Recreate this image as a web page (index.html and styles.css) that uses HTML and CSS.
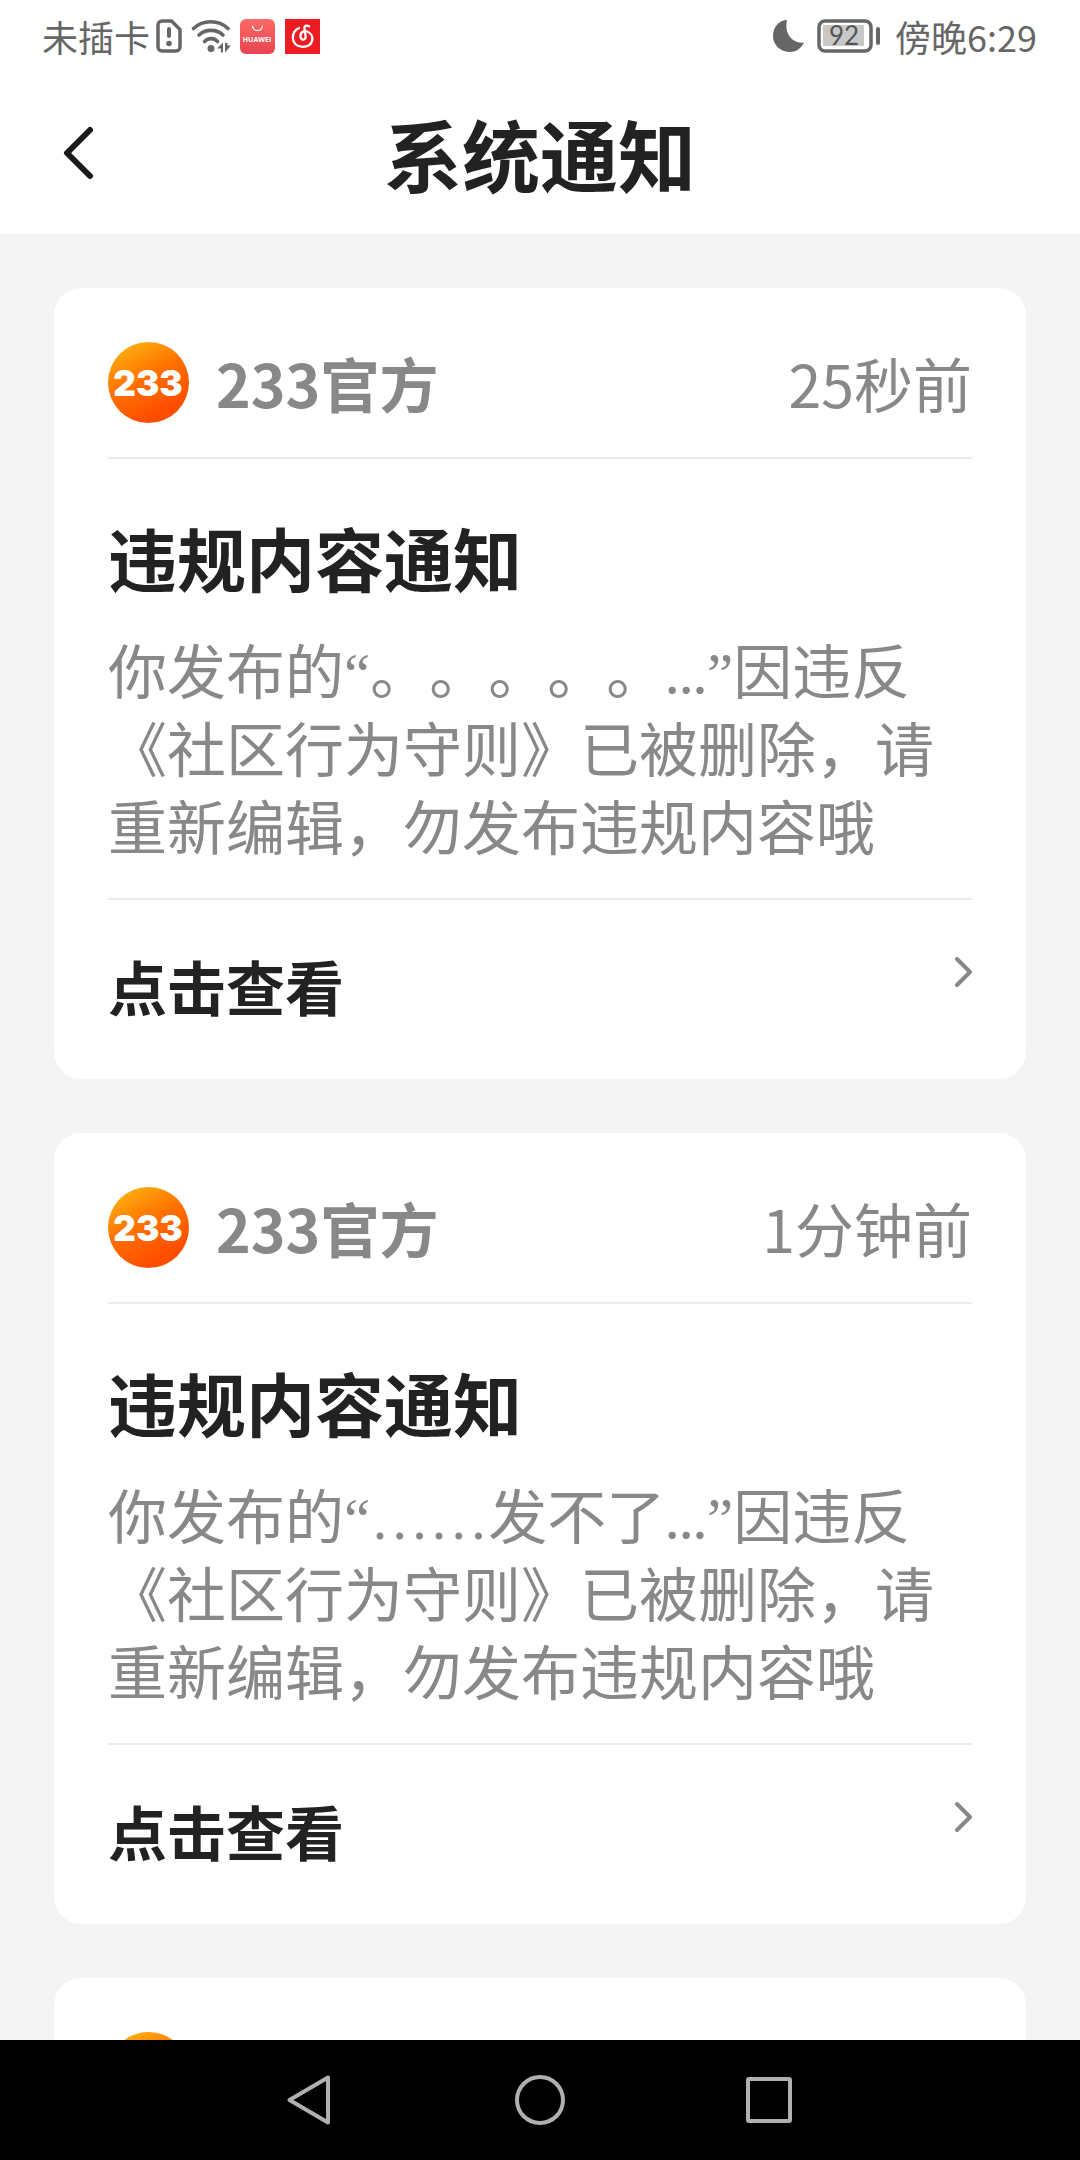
FILE: index.html
```html
<!DOCTYPE html>
<html lang="zh-CN">
<head>
<meta charset="utf-8">
<meta name="viewport" content="width=device-width, initial-scale=1">
<title>系统通知</title>
<link rel="stylesheet" href="styles.css">
</head>
<body>
<svg class="defs" width="0" height="0" aria-hidden="true">
  <defs>
    <linearGradient id="orange" x1="0.15" y1="0.05" x2="0.6" y2="0.9">
      <stop offset="0" stop-color="#ffb010"/>
      <stop offset="0.5" stop-color="#ff7200"/>
      <stop offset="1" stop-color="#ff4d00"/>
    </linearGradient>
    <linearGradient id="coral" x1="0" y1="0" x2="0" y2="1">
      <stop offset="0" stop-color="#fb6a66"/>
      <stop offset="1" stop-color="#e9434f"/>
    </linearGradient>
  </defs>
</svg>

<div class="statusbar">
  <div class="status-left">
    <span>未插卡</span>
    <svg class="sim" width="26" height="34" viewBox="0 0 26 34">
      <path d="M6 2h9.500L24 10.500V28a4 4 0 0 1-4 4H6a4 4 0 0 1-4-4V6a4 4 0 0 1 4-4z" fill="none" stroke="#666" stroke-width="3.500" stroke-linejoin="round"/>
      <path d="M13 10v7" stroke="#666" stroke-width="4" stroke-linecap="round"/>
      <circle cx="13" cy="24.500" r="2.800" fill="#666"/>
    </svg>
    <svg class="wifi" width="40" height="34" viewBox="0 0 40 34">
      <g fill="none" stroke="#666" stroke-width="3.600" stroke-linecap="round">
        <path d="M2.500 9.500C12 .500 27.500 .500 37 9.500"/>
        <path d="M8 16c6.500-6.200 17.500-6.200 24 0"/>
        <path d="M13.500 22.500c3.800-3.800 9.500-3.800 13 0"/>
      </g>
      <circle cx="20" cy="29.500" r="3.500" fill="#666"/>
      <path d="M26 29.500l6-6v10h-2v-4zM34 24v9.500l6-7h-3.500v-2.500z" fill="#666"/>
    </svg>
    <svg class="app" width="35" height="35" viewBox="0 0 35 35">
      <rect width="35" height="35" rx="6" fill="url(#coral)"/>
      <path d="M12.500 7c.800 6 9.200 6 10 0" fill="none" stroke="#fff" stroke-width="1.200" stroke-linecap="round"/>
      <text class="app-name" x="17" y="23" text-anchor="middle">HUAWEI</text>
    </svg>
    <svg class="app" width="35" height="35" viewBox="0 0 35 35">
      <rect width="35" height="35" fill="#ec1c24"/>
      <path d="M14 9C5.500 12 5 27.300 17.500 27.800 29 28 30.500 15.500 22 12.500c-3-1-7 .8-6.500 5.200.6 4.300 5.600 3.700 5.100-.5L19.500 10c-.6-3.500 2-4.200 4.500-2.700" fill="none" stroke="#fff" stroke-width="2.300" stroke-linecap="round"/>
    </svg>
  </div>
  <div class="status-right">
    <svg class="moon" width="32" height="34" viewBox="0 0 32 34">
      <path d="M14 1C11 14 19 25 31 23.500 28 30 22.500 33 17 33 7.500 33 0 26 0 17 0 8 6 1 14 1z" fill="#666"/>
    </svg>
    <svg class="battery" width="64" height="34" viewBox="0 0 64 34">
      <rect x="2" y="2" width="52" height="30" rx="6" fill="none" stroke="#666" stroke-width="3.500"/>
      <rect x="6" y="6" width="41" height="21" fill="#c8c8c8"/>
      <rect x="59" y="8" width="4" height="18" rx="2" fill="#666"/>
      <text class="charge" x="27" y="26" text-anchor="middle">92</text>
    </svg>
    <span>傍晚6:29</span>
  </div>
</div>

<header class="topbar">
  <button class="back" type="button" aria-label="返回">
    <svg width="34" height="54" viewBox="0 0 34 54"><path d="M29 4L6 27l23 23" fill="none" stroke="#1a1a1a" stroke-width="6" stroke-linecap="round" stroke-linejoin="round"/></svg>
  </button>
  <h1 class="page-title">系统通知</h1>
</header>

<main class="feed">
  <article class="card">
    <div class="card-head">
      <svg class="avatar" width="81" height="81" viewBox="0 0 81 81">
        <circle cx="40.500" cy="40.500" r="40.500" fill="url(#orange)"/>
        <text class="brand" x="40" y="54" text-anchor="middle">233</text>
      </svg>
      <span class="sender">233官方</span>
      <time class="time">25秒前</time>
    </div>
    <div class="card-body">
      <h2 class="card-title">违规内容通知</h2>
      <p class="message">你发布的<span class="punct">“</span>。。。。。<span class="dots">...</span><span class="punct">”</span>因违反《社区行为守则》已被删除，请重新编辑，勿发布违规内容哦</p>
    </div>
    <a class="card-link" href="#">
      <span>点击查看</span>
      <svg width="20" height="36" viewBox="0 0 20 36"><path d="M5 5l13 13L5 31" fill="none" stroke="#888" stroke-width="4" stroke-linecap="round" stroke-linejoin="round"/></svg>
    </a>
  </article>

  <article class="card">
    <div class="card-head">
      <svg class="avatar" width="81" height="81" viewBox="0 0 81 81">
        <circle cx="40.500" cy="40.500" r="40.500" fill="url(#orange)"/>
        <text class="brand" x="40" y="54" text-anchor="middle">233</text>
      </svg>
      <span class="sender">233官方</span>
      <time class="time">1分钟前</time>
    </div>
    <div class="card-body">
      <h2 class="card-title">违规内容通知</h2>
      <p class="message">你发布的<span class="punct">“……</span>发不了<span class="dots">...</span><span class="punct">”</span>因违反《社区行为守则》已被删除，请重新编辑，勿发布违规内容哦</p>
    </div>
    <a class="card-link" href="#">
      <span>点击查看</span>
      <svg width="20" height="36" viewBox="0 0 20 36"><path d="M5 5l13 13L5 31" fill="none" stroke="#888" stroke-width="4" stroke-linecap="round" stroke-linejoin="round"/></svg>
    </a>
  </article>

  <article class="card">
    <div class="card-head">
      <svg class="avatar" width="81" height="81" viewBox="0 0 81 81">
        <circle cx="40.500" cy="40.500" r="40.500" fill="url(#orange)"/>
      </svg>
    </div>
  </article>
</main>

<nav class="navbar">
  <button type="button" aria-label="后退">
    <svg width="50" height="54" viewBox="0 0 50 54"><path d="M43 4.500v45L4.500 27z" fill="none" stroke="#b0b0b0" stroke-width="4" stroke-linejoin="round"/></svg>
  </button>
  <button type="button" aria-label="主页">
    <svg width="50" height="54" viewBox="0 0 50 54"><circle cx="25" cy="27" r="23" fill="none" stroke="#b0b0b0" stroke-width="4"/></svg>
  </button>
  <button type="button" aria-label="最近任务">
    <svg width="50" height="54" viewBox="0 0 50 54"><rect x="3" y="6" width="42" height="42" rx="1" fill="none" stroke="#b0b0b0" stroke-width="4" stroke-linejoin="round"/></svg>
  </button>
</nav>
</body>
</html>
```
FILE: styles.css
```css
* {
  box-sizing: border-box;
}

body {
  margin: 0;
  height: 100vh;
  display: flex;
  flex-direction: column;
  background: #f4f4f4;
  color: #222;
  font-family: "Noto Sans CJK SC", sans-serif;
  text-spacing-trim: space-all;
}

h1,
h2,
p {
  margin: 0;
}

svg {
  display: block;
  flex: none;
}

button {
  padding: 0;
  border: 0;
  background: none;
}

.defs {
  position: absolute;
}

/* Status bar */
.statusbar {
  flex: none;
  display: flex;
  justify-content: space-between;
  height: 72px;
  padding: 0 43px 0 42px;
  background: #fff;
  color: #666;
  font-size: 36px;
  line-height: 70px;
}

.status-left,
.status-right {
  display: flex;
  align-items: center;
}

.sim {
  margin-left: 6px;
}

.wifi {
  margin: 0 9px;
}

.app + .app {
  margin-left: 10px;
}

.app-name {
  fill: #fff;
  font: 700 7px "Open Sans", sans-serif;
}

.battery {
  margin: 0 14px 0 12px;
}

.charge {
  fill: #555;
  font: 400 26px Lato, sans-serif;
}

/* Top bar */
.topbar {
  flex: none;
  display: grid;
  grid-template-columns: 108px 1fr 108px;
  align-items: center;
  height: 162px;
  background: #fff;
}

.back {
  justify-self: end;
  margin-right: 13px;
}

.page-title {
  font-size: 78px;
  line-height: 112px;
  text-align: center;
}

/* Notification cards */
.feed {
  flex: 1;
  min-height: 0;
  display: flex;
  flex-direction: column;
  gap: 54px;
  padding: 54px 54px 0;
  overflow: hidden;
}

.card {
  flex: none;
  padding: 0 54px;
  border-radius: 27px;
  background: #fff;
}

.card-head {
  display: flex;
  align-items: center;
  padding: 54px 0 34px;
  border-bottom: 2px solid #ebebeb;
  color: #888;
  font-size: 59px;
  line-height: 81px;
}

.brand {
  fill: #fff;
  font: 900 35px Inter, sans-serif;
}

.sender {
  margin-left: 27px;
  font-weight: 700;
}

.time {
  margin-left: auto;
}

.card-body {
  padding: 56px 0 34px;
  border-bottom: 2px solid #ebebeb;
}

.card-title {
  margin-bottom: 31px;
  font-size: 69px;
  line-height: 84px;
}

.message {
  color: #888;
  font-size: 59px;
  line-height: 78px;
}

/* Western punctuation: half-width quotes, ellipses on the baseline */
.punct,
.dots {
  line-height: 1;
}

.punct {
  font-family: "Liberation Serif", serif;
}

.dots {
  font-family: Lato, sans-serif;
}

.card-link {
  display: flex;
  justify-content: space-between;
  align-items: flex-start;
  padding: 54px 0 61px;
  color: #222;
  font-size: 59px;
  font-weight: 700;
  line-height: 64px;
  text-decoration: none;
}

/* System navigation */
.navbar {
  flex: none;
  display: grid;
  grid-template-columns: repeat(3, 1fr);
  height: 120px;
  padding: 0 18%;
  background: #000;
}

.navbar button {
  display: grid;
  place-items: center;
}
```
